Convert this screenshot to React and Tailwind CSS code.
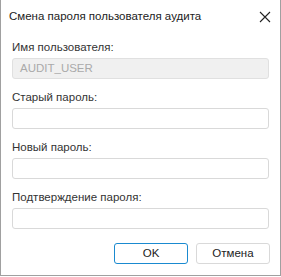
import React from 'react';

const fields = [
  { label: 'Имя пользователя:', value: 'AUDIT_USER', disabled: true },
  { label: 'Старый пароль:', value: '' },
  { label: 'Новый пароль:', value: '' },
  { label: 'Подтверждение пароля:', value: '' },
];

const App = () => {
  return (
    <div
      className="w-[281px] h-[276px] bg-white border border-t-0 border-[#a0a0a0] flex flex-col text-[#333]"
      style={{ fontFamily: '"Liberation Sans", "DejaVu Sans", sans-serif' }}
    >
      {/* Title */}
      <div className="h-[33px] flex items-center justify-between pl-[8px] pr-[9px]">
        <span className="text-[11.5px] text-[#222]">Смена пароля пользователя аудита</span>
        <svg width="12" height="12" viewBox="0 0 12 12" className="text-[#222]">
          <path d="M1 1 L11 11 M11 1 L1 11" stroke="currentColor" strokeWidth="1.1" fill="none" />
        </svg>
      </div>

      {/* Fields */}
      <div className="flex flex-col px-[11px] pt-[7px]">
        {fields.map((f) => (
          <div key={f.label} className="flex flex-col h-[50px]">
            <label className="text-[11.5px] leading-[15px] mb-[3px] text-[#333]">{f.label}</label>
            <div
              className={`h-[21px] rounded-[3px] border flex items-center px-[7px] text-[11.5px] ${
                f.disabled ? 'bg-[#f0f0f0] border-[#e0e0e0] text-[#aaa]' : 'bg-white border-[#d9d9d9]'
              }`}
            >
              {f.value}
            </div>
          </div>
        ))}
      </div>

      {/* Buttons */}
      <div className="flex justify-end gap-[8px] pr-[10px] mt-[3px]">
        <button className="w-[74px] h-[21px] rounded-[3px] border border-[#1a8ad0] bg-white text-[11.5px] text-[#222]">
          OK
        </button>
        <button className="w-[74px] h-[21px] rounded-[3px] border border-[#d9d9d9] bg-white text-[11.5px] text-[#222]">
          Отмена
        </button>
      </div>
    </div>
  );
};

export default App;
